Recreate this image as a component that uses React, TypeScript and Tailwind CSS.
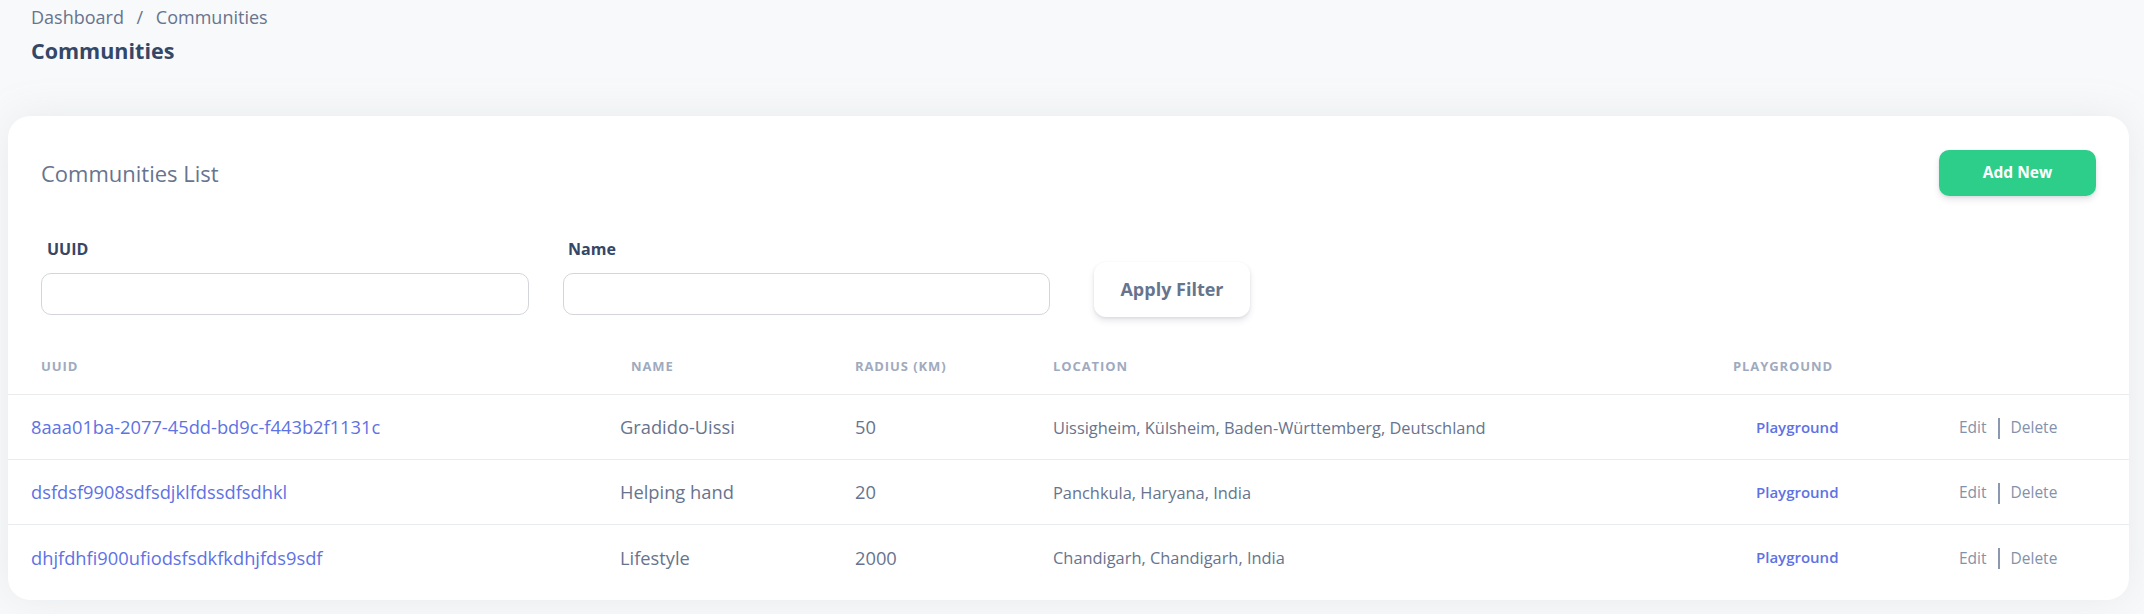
import React from 'react';

type Community = {
  uuid: string;
  name: string;
  radius: string;
  location: string;
};

const communities: Community[] = [
  {
    uuid: '8aaa01ba-2077-45dd-bd9c-f443b2f1131c',
    name: 'Gradido-Uissi',
    radius: '50',
    location: 'Uissigheim, Külsheim, Baden-Württemberg, Deutschland',
  },
  {
    uuid: 'dsfdsf9908sdfsdjklfdssdfsdhkl',
    name: 'Helping hand',
    radius: '20',
    location: 'Panchkula, Haryana, India',
  },
  {
    uuid: 'dhjfdhfi900ufiodsfsdkfkdhjfds9sdf',
    name: 'Lifestyle',
    radius: '2000',
    location: 'Chandigarh, Chandigarh, India',
  },
];

const cols = 'grid grid-cols-[612px_235px_198px_680px_226px_1fr]';

export default function App() {
  return (
    <div className="min-h-screen bg-[#f8f9fa] pb-[14px] font-['Open_Sans',sans-serif]">
      {/* Page header */}
      <div className="pl-[31px] pt-[4px]">
        <div className="text-[18px] leading-[27px] text-[#67748e]">
          Dashboard <span className="mx-[8px]">/</span> Communities
        </div>
        <h1 className="mt-[5px] text-[21.5px] font-bold leading-[30px] text-[#344767]">Communities</h1>
      </div>

      {/* Card */}
      <div className="ml-[8px] mr-[15px] mt-[50px] rounded-[22px] bg-white pb-[10px] shadow-[0_0_40px_0_rgba(136,152,170,0.15)]">
        <div className="flex items-center justify-between px-[33px] pt-[34px]">
          <h2 className="text-[22px] font-normal leading-[30px] text-[#67748e]">Communities List</h2>
          <button className="h-[46px] w-[157px] rounded-[10px] bg-[#2dce89] text-[15.5px] font-bold text-white shadow-[0_4px_6px_rgba(50,50,93,0.11),0_1px_3px_rgba(0,0,0,0.08)]">
            Add New
          </button>
        </div>

        {/* Filters */}
        <div className="mt-[41px] flex items-start gap-[34px] px-[33px]">
          <div className="w-[488px]">
            <label className="block pl-[6px] text-[16px] font-bold leading-[24px] text-[#344767]">UUID</label>
            <input className="mt-[12px] h-[42px] w-full rounded-[10px] border border-[#d2d6da] bg-white px-3 outline-none" />
          </div>
          <div className="w-[487px]">
            <label className="block pl-[5px] text-[16px] font-bold leading-[24px] text-[#344767]">Name</label>
            <input className="mt-[12px] h-[42px] w-full rounded-[10px] border border-[#d2d6da] bg-white px-3 outline-none" />
          </div>
          <button className="ml-[10px] mt-[25px] h-[55px] w-[156px] rounded-[12px] bg-white text-[18px] font-bold text-[#67748e] shadow-[0_4px_6px_rgba(50,50,93,0.11),0_1px_3px_rgba(0,0,0,0.08)]">
            Apply Filter
          </button>
        </div>

        {/* Table */}
        <div className="mt-[22px]">
          <div className={`${cols} h-[56px] items-center border-b border-[#e9ecef] text-[13px] font-bold uppercase tracking-[0.9px] text-[#a0aabe]`}>
            <div className="pl-[33px]">UUID</div>
            <div className="pl-[11px]">Name</div>
            <div>Radius (KM)</div>
            <div>Location</div>
            <div>Playground</div>
            <div></div>
          </div>
          {communities.map((c, i) => (
            <div
              key={c.uuid}
              className={`${cols} h-[65px] items-center ${i < communities.length - 1 ? 'border-b border-[#e9ecef]' : ''}`}
            >
              <div className="pl-[23px] text-[18.3px] text-[#5e72e4]">
                <a href="#">{c.uuid}</a>
              </div>
              <div className="text-[18.3px] text-[#67748e]">{c.name}</div>
              <div className="text-[18.3px] text-[#67748e]">{c.radius}</div>
              <div className="pt-[2px] text-[16.4px] text-[#67748e]">{c.location}</div>
              <div className="pl-[23px] text-[15px] font-semibold text-[#5e72e4]">
                <a href="#">Playground</a>
              </div>
              <div className="flex items-center pt-[2px] text-[15.5px] text-[#8392ab]">
                <a href="#">Edit</a>
                <span className="mx-[11px] inline-block h-[21px] w-[2px] bg-[#8c98b0]" />
                <a href="#">Delete</a>
              </div>
            </div>
          ))}
        </div>
      </div>
    </div>
  );
}
